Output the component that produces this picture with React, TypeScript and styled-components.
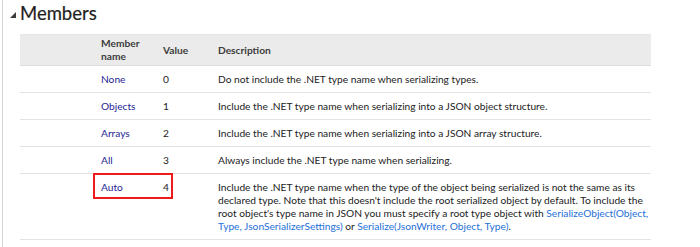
import React from "react";
import styled, { createGlobalStyle } from "styled-components";

const Global = createGlobalStyle`
  html, body { margin: 0; padding: 0; background: #fff; }
  body { font-family: "Segoe UI", Lato, "Open Sans", sans-serif; color: #222; }
`;

const Page = styled.div`
  margin-left: 2px;
  border-left: 1px solid #d4d4d4;
  height: 247px;
  box-sizing: border-box;
  padding: 1px 0 0 7px;
  overflow: hidden;
`;

const Heading = styled.h2`
  display: flex;
  align-items: center;
  gap: 4px;
  margin: 0;
  font-size: 18.5px;
  font-weight: 400;
  line-height: 24px;
  color: #1e1e1e;
  -webkit-text-stroke: 0.2px #1e1e1e;
`;

const Arrow = styled.svg`
  width: 6px;
  height: 6px;
  margin-top: 4px;
  fill: #3a3a3a;
`;

const Table = styled.table`
  margin: 9px 0 0 10px;
  width: 631px;
  table-layout: fixed;
  border-collapse: collapse;
  font-size: 10.2px;
  line-height: 13px;
`;

const HeadRow = styled.tr`
  background: #ebebeb;
  border-top: 1px solid #e6e6e6;
  border-bottom: 1px solid #dedede;
`;

const Th = styled.th<{ $w?: number }>`
  text-align: left;
  font-weight: 700;
  color: #3c3c3c;
  padding: 2px 8px 2px;
  height: 26px;
  vertical-align: middle;
  width: ${(p) => (p.$w ? `${p.$w}px` : "auto")};
  box-sizing: border-box;
`;

const Row = styled.tr`
  border-bottom: 1px solid #e3e3e3;
`;

const Td = styled.td<{ $desc?: boolean }>`
  padding: 7px ${(p) => (p.$desc ? "0" : "8px")} 6px 8px;
  vertical-align: top;
  color: #222;
  position: relative;
  white-space: ${(p) => (p.$desc ? "nowrap" : "normal")};
`;

const MemberLink = styled.span`
  color: #1f1f96;
`;

const DocLink = styled.span`
  color: #2670d8;
`;

const Highlight = styled.span`
  position: absolute;
  left: 0;
  top: -1px;
  width: 80px;
  height: 26px;
  border: 2px solid #f01a1a;
  box-sizing: border-box;
  pointer-events: none;
`;

type Member = { name: string; value: number; desc: React.ReactNode; mark?: boolean };

const members: Member[] = [
  { name: "None", value: 0, desc: "Do not include the .NET type name when serializing types." },
  { name: "Objects", value: 1, desc: "Include the .NET type name when serializing into a JSON object structure." },
  { name: "Arrays", value: 2, desc: "Include the .NET type name when serializing into a JSON array structure." },
  { name: "All", value: 3, desc: "Always include the .NET type name when serializing." },
  {
    name: "Auto",
    value: 4,
    mark: true,
    desc: (
      <>
        Include the .NET type name when the type of the object being serialized is not the same as its
        <br />
        declared type. Note that this doesn't include the root serialized object by default. To include the
        <br />
        root object's type name in JSON you must specify a root type object with{" "}
        <DocLink>SerializeObject(Object,</DocLink>
        <br />
        <DocLink>Type, JsonSerializerSettings)</DocLink> or <DocLink>Serialize(JsonWriter, Object, Type)</DocLink>.
      </>
    ),
  },
];

export default function App() {
  return (
    <>
      <Global />
      <Page>
        <Heading>
          <Arrow viewBox="0 0 6 6">
            <polygon points="6,0 6,6 0,6" />
          </Arrow>
          Members
        </Heading>
        <Table>
          <thead>
            <HeadRow>
              <Th $w={73} />
              <Th $w={62}>
                Member
                <br />
                name
              </Th>
              <Th $w={55}>Value</Th>
              <Th>Description</Th>
            </HeadRow>
          </thead>
          <tbody>
            {members.map((m) => (
              <Row key={m.name}>
                <Td />
                <Td>
                  {m.mark && <Highlight />}
                  <MemberLink>{m.name}</MemberLink>
                </Td>
                <Td>{m.value}</Td>
                <Td $desc>{m.desc}</Td>
              </Row>
            ))}
          </tbody>
        </Table>
      </Page>
    </>
  );
}
